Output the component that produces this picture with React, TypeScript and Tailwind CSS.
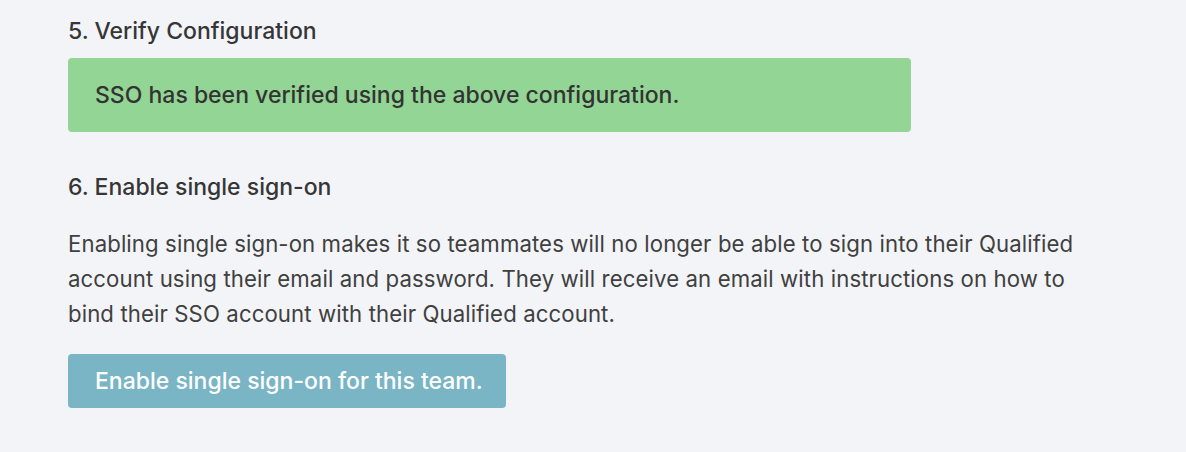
import React from "react";

export default function App() {
  return (
    <div className="min-h-[452px] w-full bg-[#f3f4f8] text-[#363636]" style={{ fontFamily: "Inter, 'Noto Sans', sans-serif" }}>
      <div className="pl-[68px] pt-[16px] w-[1120px]">
        <h3 className="text-[23px] leading-[30px] font-medium">5. Verify Configuration</h3>
        <div className="mt-[12px] w-[843px] h-[74px] rounded-[4px] bg-[#92d594] flex items-center px-[27px]">
          <span className="text-[23px] font-medium text-[#333]">SSO has been verified using the above configuration.</span>
        </div>
        <h3 className="mt-[40px] text-[23px] leading-[30px] font-medium">6. Enable single sign-on</h3>
        <p className="mt-[24px] w-[1040px] text-[22.2px] leading-[35px] tracking-[0.1px] text-[#404040]">
          Enabling single sign-on makes it so teammates will no longer be able to sign into their Qualified account using their email and password. They will receive an email with instructions on how to bind their SSO account with their Qualified account.
        </p>
        <button className="mt-[23px] h-[54px] w-[438px] rounded-[4px] bg-[#79b5c5] text-left px-[27px] text-white text-[23px] font-medium whitespace-nowrap">
          Enable single sign-on for this team.
        </button>
      </div>
    </div>
  );
}
